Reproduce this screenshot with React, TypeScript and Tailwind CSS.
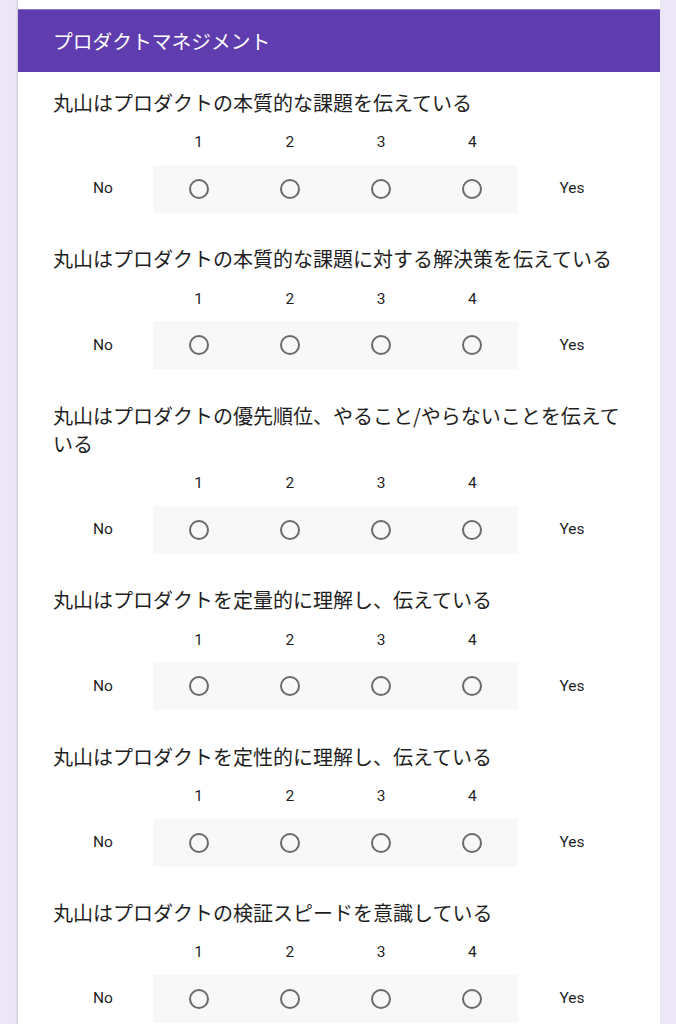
import React from 'react'

const questions = [
  '丸山はプロダクトの本質的な課題を伝えている',
  '丸山はプロダクトの本質的な課題に対する解決策を伝えている',
  '丸山はプロダクトの優先順位、やること/やらないことを伝えている',
  '丸山はプロダクトを定量的に理解し、伝えている',
  '丸山はプロダクトを定性的に理解し、伝えている',
  '丸山はプロダクトの検証スピードを意識している',
]

const scale = [1, 2, 3, 4]

function Radio() {
  return (
    <span className="block w-5 h-5 rounded-full border-2 border-[#6a6a6a] bg-transparent" />
  )
}

function ScaleQuestion({ title }: { title: string }) {
  return (
    <div className="pt-[32.4px] first:pt-[17px]">
      <p className="text-[20px] leading-[28px] text-[#1f1f1f]">{title}</p>

      {/* numbers */}
      <div className="grid grid-cols-[100px_repeat(4,91.25px)_108px] h-6 mt-[14px] items-center text-[15.5px] text-[#1f1f1f] font-['Roboto','Noto_Sans_CJK_JP',sans-serif]">
        <span />
        {scale.map(n => (
          <span key={n} className="text-center">{n}</span>
        ))}
        <span />
      </div>

      {/* radios */}
      <div className="grid grid-cols-[100px_365px_108px] h-12 mt-[10px] items-center text-[15.5px] text-[#1f1f1f] font-['Roboto','Noto_Sans_CJK_JP',sans-serif]">
        <span className="text-center">No</span>
        <div className="grid grid-cols-4 h-full items-center bg-[#f8f8f8]">
          {scale.map(n => (
            <div key={n} className="flex justify-center">
              <Radio />
            </div>
          ))}
        </div>
        <span className="text-center">Yes</span>
      </div>
    </div>
  )
}

export default function App() {
  return (
    <div className="min-h-screen bg-[#ece7f6] font-['Noto_Sans_CJK_JP','Roboto',sans-serif]">
      <div className="ml-[18px] w-[642px] bg-white shadow-[-1px_0_2px_rgba(0,0,0,0.15)] pt-[9px] pb-10">
        <div className="h-[63px] bg-[#603daf] flex items-center pl-[35px] border-t border-[#8f75c9]">
          <h2 className="text-[19.75px] text-white leading-none">プロダクトマネジメント</h2>
        </div>
        <div className="pl-[35px] pr-[34px]">
          {questions.map(q => (
            <ScaleQuestion key={q} title={q} />
          ))}
        </div>
      </div>
    </div>
  )
}
